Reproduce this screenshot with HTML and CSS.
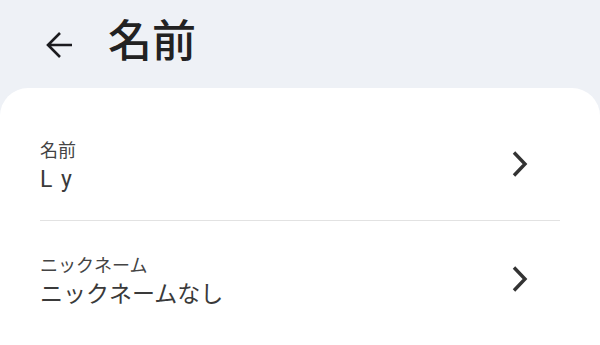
FILE: index.html
```html
<!DOCTYPE html>
<html lang="ja">
<head>
  <meta charset="UTF-8">
  <meta name="viewport" content="width=device-width, initial-scale=1.0">
  <title>名前</title>
  <link rel="stylesheet" href="styles.css">
</head>
<body>
  <div class="entete">
    <button class="retour" aria-label="戻る">
      <svg width="28" height="28" viewBox="0 0 28 28">
        <path d="M26 14H2M14 2L2 14l12 12" fill="none" stroke="#1b1b1f" stroke-width="2.6"/>
      </svg>
    </button>
    <h1 class="titre">名前</h1>
  </div>

  <div class="carte">
    <div class="ligne premiere">
      <div class="textes">
        <div class="libelle">名前</div>
        <div class="valeur">L y</div>
      </div>
      <svg class="chevron" width="20" height="28" viewBox="0 0 20 28">
        <path d="M4 2.5l11 11.5L4 25.5" fill="none" stroke="#333" stroke-width="3.4"/>
      </svg>
    </div>
    <div class="ligne">
      <div class="textes">
        <div class="libelle">ニックネーム</div>
        <div class="valeur">ニックネームなし</div>
      </div>
      <svg class="chevron" width="20" height="28" viewBox="0 0 20 28">
        <path d="M4 2.5l11 11.5L4 25.5" fill="none" stroke="#333" stroke-width="3.4"/>
      </svg>
    </div>
  </div>
</body>
</html>
```

FILE: styles.css
```css
body {
  margin: 0;
  background-color: #eef1f6;
  font-family: Roboto, "Noto Sans CJK JP", sans-serif;
  color: #1b1b1f;
}
.entete {
  display: flex;
  align-items: center;
  height: 88px;
  padding-left: 46px;
  box-sizing: border-box;
}
.retour {
  background: none;
  border: none;
  padding: 0;
  width: 28px;
  height: 28px;
  display: flex;
  margin-top: 2px;
}
.titre {
  margin: 0 0 4px 34px;
  font-size: 44px;
  font-weight: 500;
  line-height: 60px;
  color: #222;
}
.carte {
  background-color: #fff;
  border-radius: 28px 28px 0 0;
  height: 257px;
  padding: 0 40px;
}
.ligne {
  display: flex;
  align-items: center;
  justify-content: space-between;
  padding: 32px 0 24px;
}
.ligne.premiere {
  padding-top: 50px;
  border-bottom: 1.5px solid #e2e2e2;
}
.textes {
  display: flex;
  flex-direction: column;
}
.libelle {
  font-size: 18px;
  line-height: 26px;
  color: #444;
}
.valeur {
  font-size: 23px;
  line-height: 32px;
  color: #3a3a3a;
  word-spacing: 3px;
}
.chevron {
  margin-right: 30px;
  margin-bottom: 6px;
}
```
